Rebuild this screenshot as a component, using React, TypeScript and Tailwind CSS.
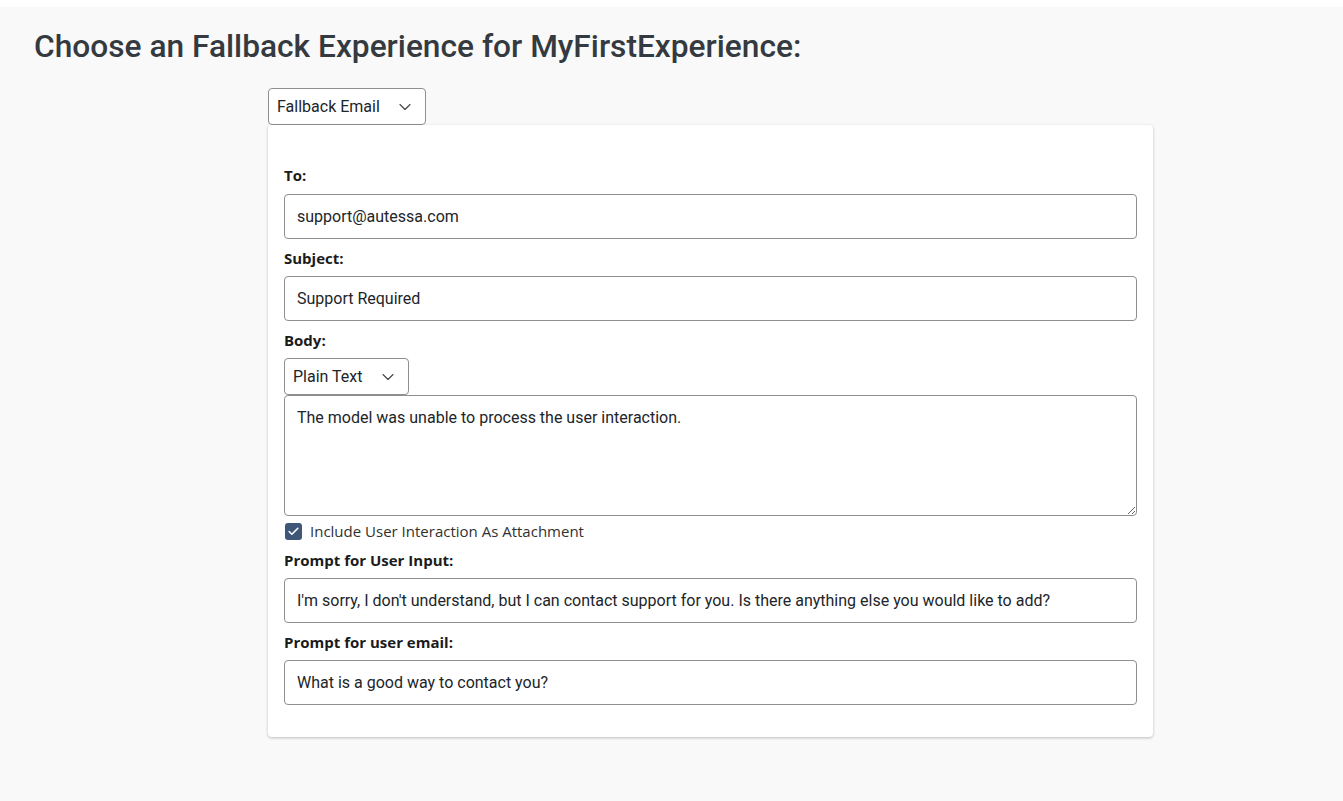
import { ChevronDown, Check } from 'lucide-react';

const labelFont = { fontFamily: '"Open Sans", "Noto Sans", sans-serif' };

function Label({ children, className = '' }: { children: React.ReactNode; className?: string }) {
  return (
    <div className={`text-[15px] font-bold leading-[19px] text-[#1b1b1b] font-['Open_Sans',sans-serif] ${className}`}>
      {children}
    </div>
  );
}

function Field({ value }: { value: string }) {
  return (
    <div className="h-[45px] flex items-center px-[12px] border border-[#8f8f8f] rounded-[4px] bg-white text-[16px] text-[#212529] font-['Roboto',sans-serif]">
      {value}
    </div>
  );
}

function Select({ value, width }: { value: string; width: string }) {
  return (
    <div
      className={`h-[37px] ${width} flex items-center justify-between pl-[8px] pr-[10px] border border-[#8f8f8f] rounded-[4px] bg-white text-[16px] text-[#212529] font-['Roboto',sans-serif]`}
    >
      <span>{value}</span>
      <ChevronDown className="h-[20px] w-[20px] text-[#444]" strokeWidth={1.3} />
    </div>
  );
}

export default function App() {
  return (
    <div className="min-h-[801px] bg-[#f9f9f9] border-t-[7px] border-white">
      <h1 className="pt-[20px] pl-[34px] text-[31.7px] font-medium leading-[40px] text-[#343a40] font-['Roboto',sans-serif]">
        Choose an Fallback Experience for MyFirstExperience:
      </h1>

      <div className="ml-[268px] w-[885px] mt-[21px]">
        <Select value="Fallback Email" width="w-[158px]" />

        <div className="bg-white rounded-[4px] shadow-[0_1px_3px_rgba(0,0,0,0.25)] px-[16px] pt-[41px] pb-[32px]">
          <Label>To:</Label>
          <div className="mt-[9px]">
            <Field value="support@autessa.com" />
          </div>

          <Label className="mt-[10px]">Subject:</Label>
          <div className="mt-[8px]">
            <Field value="Support Required" />
          </div>

          <Label className="mt-[10px]">Body:</Label>
          <div className="mt-[8px]">
            <Select value="Plain Text" width="w-[125px]" />
          </div>
          <textarea
            readOnly
            defaultValue="The model was unable to process the user interaction."
            className="block w-full h-[121px] px-[12px] py-[11px] border border-[#8f8f8f] rounded-[4px] bg-white text-[16px] leading-[22px] text-[#212529] font-['Roboto',sans-serif] outline-none resize-y"
          />

          <label className="mt-[5px] flex items-center gap-[8px] text-[15px] leading-[20px] text-[#323130]" style={labelFont}>
            <span className="h-[17px] w-[17px] ml-[1px] rounded-[3px] bg-[#3e5778] flex items-center justify-center">
              <Check className="h-[13px] w-[13px] text-white" strokeWidth={3} />
            </span>
            Include User Interaction As Attachment
          </label>

          <Label className="mt-[10px]">Prompt for User Input:</Label>
          <div className="mt-[8px]">
            <Field value="I'm sorry, I don't understand, but I can contact support for you. Is there anything else you would like to add?" />
          </div>

          <Label className="mt-[10px]">Prompt for user email:</Label>
          <div className="mt-[8px]">
            <Field value="What is a good way to contact you?" />
          </div>
        </div>
      </div>
    </div>
  );
}
